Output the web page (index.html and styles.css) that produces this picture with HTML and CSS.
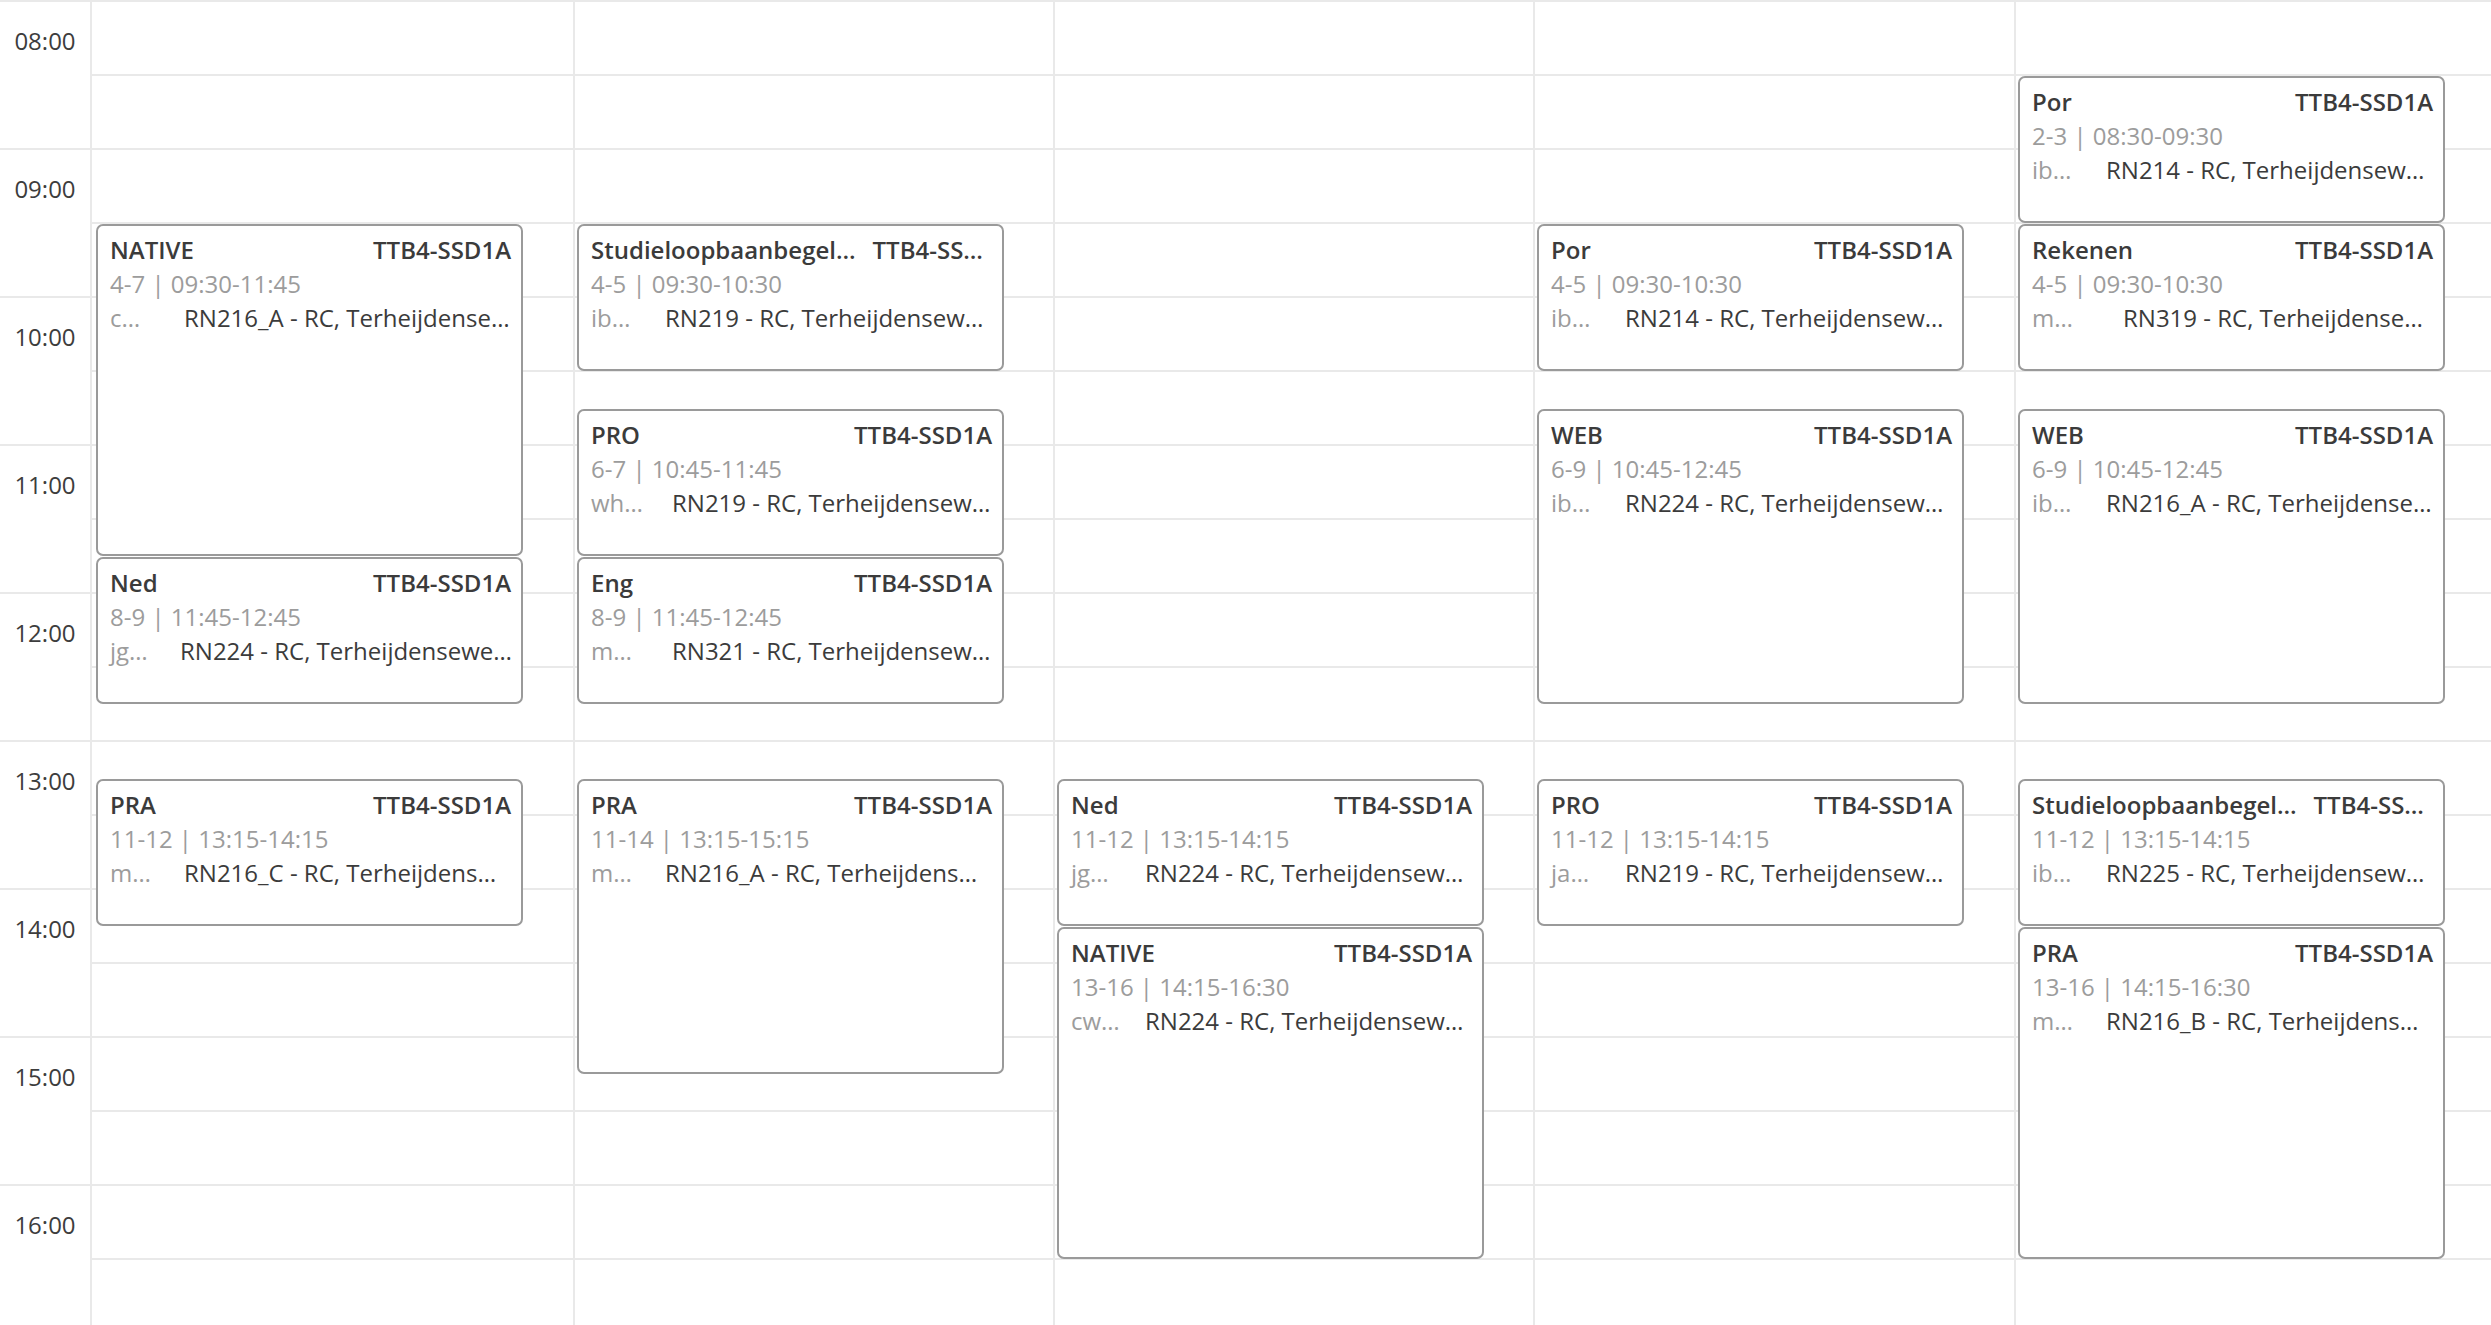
FILE: index.html
```html
<!DOCTYPE html>
<html lang="nl">
<head>
<meta charset="utf-8">
<title>Rooster</title>
<link rel="stylesheet" href="styles.css">
</head>
<body>
<div class="cal">
  <div class="times">
    <div class="hour"><span class="label">08:00</span></div>
    <div class="hour"><span class="label">09:00</span></div>
    <div class="hour"><span class="label">10:00</span></div>
    <div class="hour"><span class="label">11:00</span></div>
    <div class="hour"><span class="label">12:00</span></div>
    <div class="hour"><span class="label">13:00</span></div>
    <div class="hour"><span class="label">14:00</span></div>
    <div class="hour"><span class="label">15:00</span></div>
    <div class="hour"><span class="label">16:00</span></div>
  </div>

  <div class="day day-first">
    <div class="slots"><div></div><div></div><div></div><div></div><div></div><div></div><div></div><div></div><div></div><div></div><div></div><div></div><div></div><div></div><div></div><div></div><div></div><div></div></div>
    <div class="ev" style="top:224px;height:332px">
      <div class="ev-head"><span class="ev-title">NATIVE</span><span class="ev-group">TTB4-SSD1A</span></div>
      <div class="ev-time">4-7 | 09:30-11:45</div>
      <div class="ev-meta"><span class="ev-teacher">c…</span><span class="ev-room">RN216_A - RC, Terheijdense…</span></div>
    </div>
    <div class="ev" style="top:557px;height:147px">
      <div class="ev-head"><span class="ev-title">Ned</span><span class="ev-group">TTB4-SSD1A</span></div>
      <div class="ev-time">8-9 | 11:45-12:45</div>
      <div class="ev-meta"><span class="ev-teacher narrow">jg…</span><span class="ev-room">RN224 - RC, Terheijdensewe…</span></div>
    </div>
    <div class="ev" style="top:779px;height:147px">
      <div class="ev-head"><span class="ev-title">PRA</span><span class="ev-group">TTB4-SSD1A</span></div>
      <div class="ev-time">11-12 | 13:15-14:15</div>
      <div class="ev-meta"><span class="ev-teacher">m…</span><span class="ev-room">RN216_C - RC, Terheijdens…</span></div>
    </div>
  </div>

  <div class="day">
    <div class="slots"><div></div><div></div><div></div><div></div><div></div><div></div><div></div><div></div><div></div><div></div><div></div><div></div><div></div><div></div><div></div><div></div><div></div><div></div></div>
    <div class="ev" style="top:224px;height:147px">
      <div class="ev-head trunc"><span class="ev-title">Studieloopbaanbegel…</span><span class="ev-group">TTB4-SS…</span></div>
      <div class="ev-time">4-5 | 09:30-10:30</div>
      <div class="ev-meta"><span class="ev-teacher">ib…</span><span class="ev-room">RN219 - RC, Terheijdensew…</span></div>
    </div>
    <div class="ev" style="top:409px;height:147px">
      <div class="ev-head"><span class="ev-title">PRO</span><span class="ev-group">TTB4-SSD1A</span></div>
      <div class="ev-time">6-7 | 10:45-11:45</div>
      <div class="ev-meta"><span class="ev-teacher wide">wh…</span><span class="ev-room">RN219 - RC, Terheijdensew…</span></div>
    </div>
    <div class="ev" style="top:557px;height:147px">
      <div class="ev-head"><span class="ev-title">Eng</span><span class="ev-group">TTB4-SSD1A</span></div>
      <div class="ev-time">8-9 | 11:45-12:45</div>
      <div class="ev-meta"><span class="ev-teacher wide">m…</span><span class="ev-room">RN321 - RC, Terheijdensew…</span></div>
    </div>
    <div class="ev" style="top:779px;height:295px">
      <div class="ev-head"><span class="ev-title">PRA</span><span class="ev-group">TTB4-SSD1A</span></div>
      <div class="ev-time">11-14 | 13:15-15:15</div>
      <div class="ev-meta"><span class="ev-teacher">m…</span><span class="ev-room">RN216_A - RC, Terheijdens…</span></div>
    </div>
  </div>

  <div class="day">
    <div class="slots"><div></div><div></div><div></div><div></div><div></div><div></div><div></div><div></div><div></div><div></div><div></div><div></div><div></div><div></div><div></div><div></div><div></div><div></div></div>
    <div class="ev" style="top:779px;height:147px">
      <div class="ev-head"><span class="ev-title">Ned</span><span class="ev-group">TTB4-SSD1A</span></div>
      <div class="ev-time">11-12 | 13:15-14:15</div>
      <div class="ev-meta"><span class="ev-teacher">jg…</span><span class="ev-room">RN224 - RC, Terheijdensew…</span></div>
    </div>
    <div class="ev" style="top:927px;height:332px">
      <div class="ev-head"><span class="ev-title">NATIVE</span><span class="ev-group">TTB4-SSD1A</span></div>
      <div class="ev-time">13-16 | 14:15-16:30</div>
      <div class="ev-meta"><span class="ev-teacher">cw…</span><span class="ev-room">RN224 - RC, Terheijdensew…</span></div>
    </div>
  </div>

  <div class="day">
    <div class="slots"><div></div><div></div><div></div><div></div><div></div><div></div><div></div><div></div><div></div><div></div><div></div><div></div><div></div><div></div><div></div><div></div><div></div><div></div></div>
    <div class="ev" style="top:224px;height:147px">
      <div class="ev-head"><span class="ev-title">Por</span><span class="ev-group">TTB4-SSD1A</span></div>
      <div class="ev-time">4-5 | 09:30-10:30</div>
      <div class="ev-meta"><span class="ev-teacher">ib…</span><span class="ev-room">RN214 - RC, Terheijdensew…</span></div>
    </div>
    <div class="ev" style="top:409px;height:295px">
      <div class="ev-head"><span class="ev-title">WEB</span><span class="ev-group">TTB4-SSD1A</span></div>
      <div class="ev-time">6-9 | 10:45-12:45</div>
      <div class="ev-meta"><span class="ev-teacher">ib…</span><span class="ev-room">RN224 - RC, Terheijdensew…</span></div>
    </div>
    <div class="ev" style="top:779px;height:147px">
      <div class="ev-head"><span class="ev-title">PRO</span><span class="ev-group">TTB4-SSD1A</span></div>
      <div class="ev-time">11-12 | 13:15-14:15</div>
      <div class="ev-meta"><span class="ev-teacher">ja…</span><span class="ev-room">RN219 - RC, Terheijdensew…</span></div>
    </div>
  </div>

  <div class="day">
    <div class="slots"><div></div><div></div><div></div><div></div><div></div><div></div><div></div><div></div><div></div><div></div><div></div><div></div><div></div><div></div><div></div><div></div><div></div><div></div></div>
    <div class="ev" style="top:76px;height:147px">
      <div class="ev-head"><span class="ev-title">Por</span><span class="ev-group">TTB4-SSD1A</span></div>
      <div class="ev-time">2-3 | 08:30-09:30</div>
      <div class="ev-meta"><span class="ev-teacher">ib…</span><span class="ev-room">RN214 - RC, Terheijdensew…</span></div>
    </div>
    <div class="ev" style="top:224px;height:147px">
      <div class="ev-head"><span class="ev-title">Rekenen</span><span class="ev-group">TTB4-SSD1A</span></div>
      <div class="ev-time">4-5 | 09:30-10:30</div>
      <div class="ev-meta"><span class="ev-teacher widest">m…</span><span class="ev-room">RN319 - RC, Terheijdense…</span></div>
    </div>
    <div class="ev" style="top:409px;height:295px">
      <div class="ev-head"><span class="ev-title">WEB</span><span class="ev-group">TTB4-SSD1A</span></div>
      <div class="ev-time">6-9 | 10:45-12:45</div>
      <div class="ev-meta"><span class="ev-teacher">ib…</span><span class="ev-room">RN216_A - RC, Terheijdense…</span></div>
    </div>
    <div class="ev" style="top:779px;height:147px">
      <div class="ev-head trunc"><span class="ev-title">Studieloopbaanbegel…</span><span class="ev-group">TTB4-SS…</span></div>
      <div class="ev-time">11-12 | 13:15-14:15</div>
      <div class="ev-meta"><span class="ev-teacher">ib…</span><span class="ev-room">RN225 - RC, Terheijdensew…</span></div>
    </div>
    <div class="ev" style="top:927px;height:332px">
      <div class="ev-head"><span class="ev-title">PRA</span><span class="ev-group">TTB4-SSD1A</span></div>
      <div class="ev-time">13-16 | 14:15-16:30</div>
      <div class="ev-meta"><span class="ev-teacher">m…</span><span class="ev-room">RN216_B - RC, Terheijdens…</span></div>
    </div>
  </div>
</div>
</body>
</html>
```

FILE: styles.css
```css
html, body {
  margin: 0;
  padding: 0;
  background: #ffffff;
  overflow: hidden;
}

body {
  font-family: "Open Sans", "Noto Sans", "Liberation Sans", sans-serif;
  font-size: 24px;
  line-height: 34px;
  color: #3b3b3b;
}

.cal {
  display: grid;
  grid-template-columns: 92px 483px 480px 480px 481px 480px;
  width: 2496px;
  height: 1332px;
}

.times {
  border-right: 2px solid #e9e9e9;
}

.hour {
  box-sizing: border-box;
  height: 148px;
  border-top: 2px solid #e9e9e9;
}

.hour .label {
  display: flex;
  align-items: center;
  justify-content: center;
  box-sizing: border-box;
  height: 76px;
  padding-top: 2px;
  color: #3d3d3d;
}

.day {
  position: relative;
  border-right: 2px solid #e9e9e9;
}

.slots > div {
  box-sizing: border-box;
  height: 74px;
  border-top: 2px solid #e9e9e9;
}

.ev {
  position: absolute;
  left: 2px;
  width: 427px;
  box-sizing: border-box;
  border: 2px solid #9a9a9a;
  border-radius: 7px;
  background: #ffffff;
  padding: 7px 10px 0 12px;
  overflow: hidden;
  white-space: nowrap;
}

.day-first .ev {
  left: 4px;
}

.ev-head {
  display: flex;
  justify-content: space-between;
  gap: 16px;
  font-weight: 600;
  color: #3b3b3b;
}

.ev-head.trunc {
  justify-content: flex-start;
  gap: 17px;
}

.ev-time {
  color: #9c9c9c;
}

.ev-meta {
  display: flex;
}

.ev-teacher {
  flex: 0 0 auto;
  width: 74px;
  color: #9c9c9c;
}

.ev-teacher.narrow {
  width: 70px;
}

.ev-teacher.wide {
  width: 81px;
}

.ev-teacher.widest {
  width: 91px;
}

.ev-room {
  flex: 1 1 auto;
  min-width: 0;
  overflow: hidden;
  color: #3b3b3b;
}
```
